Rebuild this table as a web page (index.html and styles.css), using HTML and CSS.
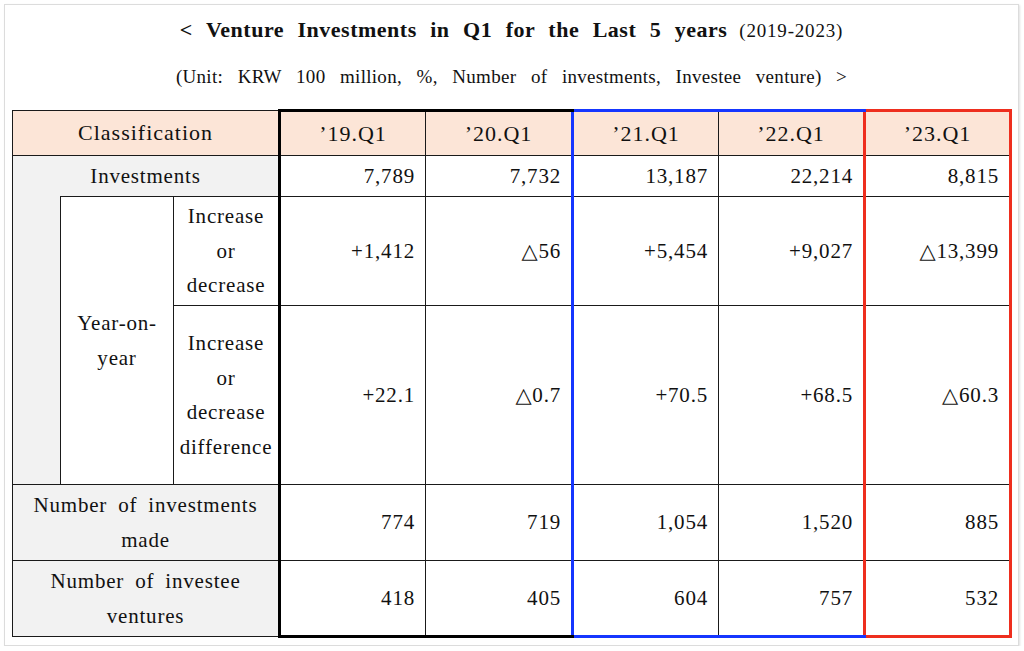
FILE: index.html
```html
<!DOCTYPE html>
<html lang="en">
<head>
<meta charset="utf-8">
<title>Venture Investments in Q1</title>
<link rel="stylesheet" href="styles.css">
</head>
<body>
<div class="card">
  <h1 class="title"><span class="title-main">&lt; Venture Investments in Q1 for the Last 5 years</span> <span class="title-years">(2019-2023)</span></h1>
  <p class="unit">(Unit: KRW 100 million, %, Number of investments, Investee venture) &gt;</p>
  <table class="data">
    <colgroup>
      <col class="c-blank"><col class="c-yoy"><col class="c-lab">
      <col class="c-q"><col class="c-q20"><col class="c-q"><col class="c-q"><col class="c-q">
    </colgroup>
    <thead>
      <tr class="r-head">
        <th colspan="3" class="h-class">Classification</th>
        <th class="k19 top">’19.Q1</th>
        <th class="k20 top">’20.Q1</th>
        <th class="k21 top">’21.Q1</th>
        <th class="k22 top">’22.Q1</th>
        <th class="k23 top">’23.Q1</th>
      </tr>
    </thead>
    <tbody>
      <tr class="r-inv">
        <th colspan="3" class="lab gray no-bottom">Investments</th>
        <td class="num k19">7,789</td>
        <td class="num k20">7,732</td>
        <td class="num k21">13,187</td>
        <td class="num k22">22,214</td>
        <td class="num k23">8,815</td>
      </tr>
      <tr class="r-inc">
        <th rowspan="2" class="gray blank"></th>
        <th rowspan="2" class="lab yoy">Year-on-<br>year</th>
        <th class="lab sub">Increase<br>or<br>decrease</th>
        <td class="num k19">+1,412</td>
        <td class="num k20">△56</td>
        <td class="num k21">+5,454</td>
        <td class="num k22">+9,027</td>
        <td class="num k23">△13,399</td>
      </tr>
      <tr class="r-diff">
        <th class="lab sub">Increase<br>or<br>decrease<br>difference</th>
        <td class="num k19">+22.1</td>
        <td class="num k20">△0.7</td>
        <td class="num k21">+70.5</td>
        <td class="num k22">+68.5</td>
        <td class="num k23">△60.3</td>
      </tr>
      <tr class="r-cnt">
        <th colspan="3" class="lab gray wide">Number of investments<br>made</th>
        <td class="num k19">774</td>
        <td class="num k20">719</td>
        <td class="num k21">1,054</td>
        <td class="num k22">1,520</td>
        <td class="num k23">885</td>
      </tr>
      <tr class="r-ven">
        <th colspan="3" class="lab gray wide">Number of investee<br>ventures</th>
        <td class="num k19 bot">418</td>
        <td class="num k20 bot">405</td>
        <td class="num k21 bot">604</td>
        <td class="num k22 bot">757</td>
        <td class="num k23 bot">532</td>
      </tr>
    </tbody>
  </table>
</div>
</body>
</html>
```

FILE: styles.css
```css
html, body {
  margin: 0;
  padding: 0;
  background: #ffffff;
}

body {
  font-family: "Liberation Serif", "Times New Roman", "DejaVu Serif", serif;
  color: #111111;
}

.card {
  box-sizing: border-box;
  margin: 4px 0 0 4px;
  width: 1015px;
  height: 642px;
  border: 1px solid #dcdcdc;
  box-shadow: 1px 1px 2px rgba(0, 0, 0, 0.12);
  padding: 6px 0 0 7px;
  background: #fff;
}

.title {
  margin: 0;
  padding-right: 7px;
  text-align: center;
  line-height: 30px;
  font-weight: normal;
}

.title-main {
  font-size: 22px;
  font-weight: bold;
  letter-spacing: 0.5px;
  word-spacing: 7.5px;
}

.title-years {
  font-size: 19px;
  letter-spacing: 0.8px;
  margin-left: 4px;
}

.unit {
  margin: 16px 0 0 0;
  padding-right: 7px;
  text-align: center;
  font-size: 19px;
  line-height: 30px;
  letter-spacing: 0.3px;
  word-spacing: 9.5px;
}

.data {
  margin-top: 17px;
  border-collapse: collapse;
  table-layout: fixed;
  width: 998px;
  font-size: 21px;
  letter-spacing: 0.8px;
}

.c-blank { width: 48px; }
.c-yoy { width: 113px; }
.c-lab { width: 106px; }
.c-q { width: 146px; }
.c-q20 { width: 147px; }

.data th,
.data td {
  border: 1px solid #1a1a1a;
  padding: 0;
  font-weight: normal;
  color: #111;
}

.r-head { height: 45px; }
.r-inv { height: 41px; }
.r-inc { height: 109px; }
.r-diff { height: 179px; }
.r-cnt { height: 76px; }
.r-ven { height: 76px; }

.r-head th {
  background: #fce5d7;
  font-size: 22px;
  letter-spacing: 1px;
  text-align: center;
}

.lab {
  text-align: center;
  vertical-align: middle;
  line-height: 34.5px;
}

.gray { background: #f2f2f2; }

.no-bottom { border-bottom: none !important; }

.blank { border-top: none !important; }

.yoy { background: #fff; }

.sub { background: #fff; }

.wide { word-spacing: 5px; }

.num {
  text-align: right;
  padding-right: 10px !important;
  vertical-align: middle;
}

.k19 { border-left: 3px solid #000 !important; }
.k19.top, .k20.top { border-top: 3px solid #000 !important; }
.k19.bot, .k20.bot { border-bottom: 3px solid #000 !important; }

.k21 { border-left: 3px solid #1536ff !important; }
.k21.top, .k22.top { border-top: 3px solid #1536ff !important; }
.k21.bot, .k22.bot { border-bottom: 3px solid #1536ff !important; }

.k23 {
  border-left: 3px solid #ee2e1e !important;
  border-right: 3px solid #ee2e1e !important;
}
.k23.top { border-top: 3px solid #ee2e1e !important; }
.k23.bot { border-bottom: 3px solid #ee2e1e !important; }
```
